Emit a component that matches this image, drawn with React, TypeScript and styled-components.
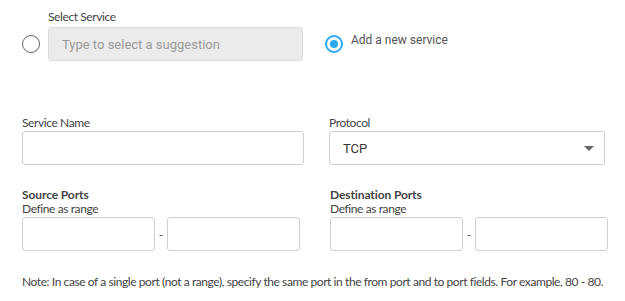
import React, { useState } from "react";
import styled, { createGlobalStyle } from "styled-components";

const GlobalStyle = createGlobalStyle`
  body {
    margin: 0;
    background: #ffffff;
    font-family: "Lato", "Liberation Sans", sans-serif;
  }
`;

export default function App() {
  const [mode, setMode] = useState<"select" | "new">("new");

  return (
    <>
      <GlobalStyle />
      <Page>
        <TopRow>
          <RadioButton type="button" checked={mode === "select"} onClick={() => setMode("select")} />
          <Field>
            <Label gap={2}>Select Service</Label>
            <TextInput disabled placeholder="Type to select a suggestion" width={255} />
          </Field>
          <RadioOption onClick={() => setMode("new")}>
            <RadioButton type="button" checked={mode === "new"} />
            <OptionText>Add a new service</OptionText>
          </RadioOption>
        </TopRow>

        <Grid>
          <Field>
            <Label gap={0}>Service Name</Label>
            <TextInput />
          </Field>
          <Field>
            <Label gap={0}>Protocol</Label>
            <SelectBox>
              <span>TCP</span>
              <Caret />
            </SelectBox>
          </Field>
        </Grid>

        <PortsGrid>
          <PortGroup title="Source Ports" />
          <PortGroup title="Destination Ports" />
        </PortsGrid>

        <Note>
          Note: In case of a single port (not a range), specify the same port in the from port and to port fields. For example, 80 - 80.
        </Note>
      </Page>
    </>
  );
}

const PortGroup = ({ title }: { title: string }) => (
  <div>
    <SectionTitle>{title}</SectionTitle>
    <SubLabel>Define as range</SubLabel>
    <RangeRow>
      <TextInput />
      <Dash>-</Dash>
      <TextInput />
    </RangeRow>
  </div>
);

const Page = styled.div`
  width: 625px;
  height: 301px;
  box-sizing: border-box;
  padding: 9px 0 0 22px;
  color: #444;
`;

const TopRow = styled.div`
  display: flex;
  align-items: flex-end;
`;

const RadioOption = styled.div`
  display: flex;
  align-items: center;
  gap: 8px;
  margin-left: 22px;
  height: 34px;
  cursor: pointer;
`;

const RadioButton = styled.button<{ checked: boolean }>`
  width: 18px;
  height: 18px;
  padding: 0;
  margin: 0 8px 8px 0;
  flex: none;
  border-radius: 50%;
  background: #fff;
  border: ${(p) => (p.checked ? "2px solid #2da9ef" : "1px solid #666")};
  position: relative;
  cursor: pointer;

  ${RadioOption} & {
    margin: 0;
  }

  &::after {
    content: "";
    display: ${(p) => (p.checked ? "block" : "none")};
    position: absolute;
    left: 3px;
    top: 3px;
    width: 8px;
    height: 8px;
    border-radius: 50%;
    background: #2da9ef;
  }
`;

const OptionText = styled.span`
  font-family: "Roboto", sans-serif;
  font-size: 12px;
  color: #555;
  margin-top: -9px;
`;

const Field = styled.div`
  display: flex;
  flex-direction: column;
`;

const Label = styled.label<{ gap: number }>`
  font-size: 12px;
  letter-spacing: -0.4px;
  line-height: 16px;
  color: #444;
  margin-bottom: ${(p) => p.gap}px;
`;

const TextInput = styled.input<{ width?: number }>`
  box-sizing: border-box;
  width: ${(p) => (p.width ? `${p.width}px` : "100%")};
  height: 34px;
  border: 1px solid #cfcfcf;
  border-radius: 3px;
  padding: 0 13px;
  font-family: "Roboto", sans-serif;
  font-size: 13px;
  color: #333;
  background: #fff;
  outline: none;

  &:disabled {
    background: #ebebeb;
    border-color: #dcdcdc;
  }

  &::placeholder {
    color: #9a9a9a;
  }
`;

const Grid = styled.div`
  display: grid;
  grid-template-columns: 282px 276px;
  column-gap: 25px;
  margin-top: 54px;
`;

const SelectBox = styled.div`
  box-sizing: border-box;
  height: 34px;
  border: 1px solid #cfcfcf;
  border-radius: 3px;
  padding: 0 10px 0 13px;
  display: flex;
  align-items: center;
  justify-content: space-between;
  font-family: "Roboto", sans-serif;
  font-size: 13px;
  color: #333;
`;

const Caret = styled.span`
  width: 0;
  height: 0;
  border-left: 5px solid transparent;
  border-right: 5px solid transparent;
  border-top: 5px solid #666;
`;

const PortsGrid = styled.div`
  display: grid;
  grid-template-columns: 278px 278px;
  column-gap: 30px;
  margin-top: 23px;
`;

const SectionTitle = styled.div`
  font-size: 12px;
  letter-spacing: -0.1px;
  font-weight: 700;
  line-height: 14px;
  color: #444;
`;

const SubLabel = styled.div`
  font-size: 12px;
  letter-spacing: -0.4px;
  line-height: 14px;
  color: #444;
  margin-bottom: 1px;
`;

const RangeRow = styled.div`
  display: flex;
  align-items: center;
`;

const Dash = styled.span`
  width: 12px;
  flex: none;
  text-align: center;
  font-size: 12px;
  color: #555;
`;

const Note = styled.p`
  margin: 24px 0 0;
  font-size: 12px;
  letter-spacing: -0.42px;
  line-height: 14px;
  color: #444;
  white-space: nowrap;
`;
